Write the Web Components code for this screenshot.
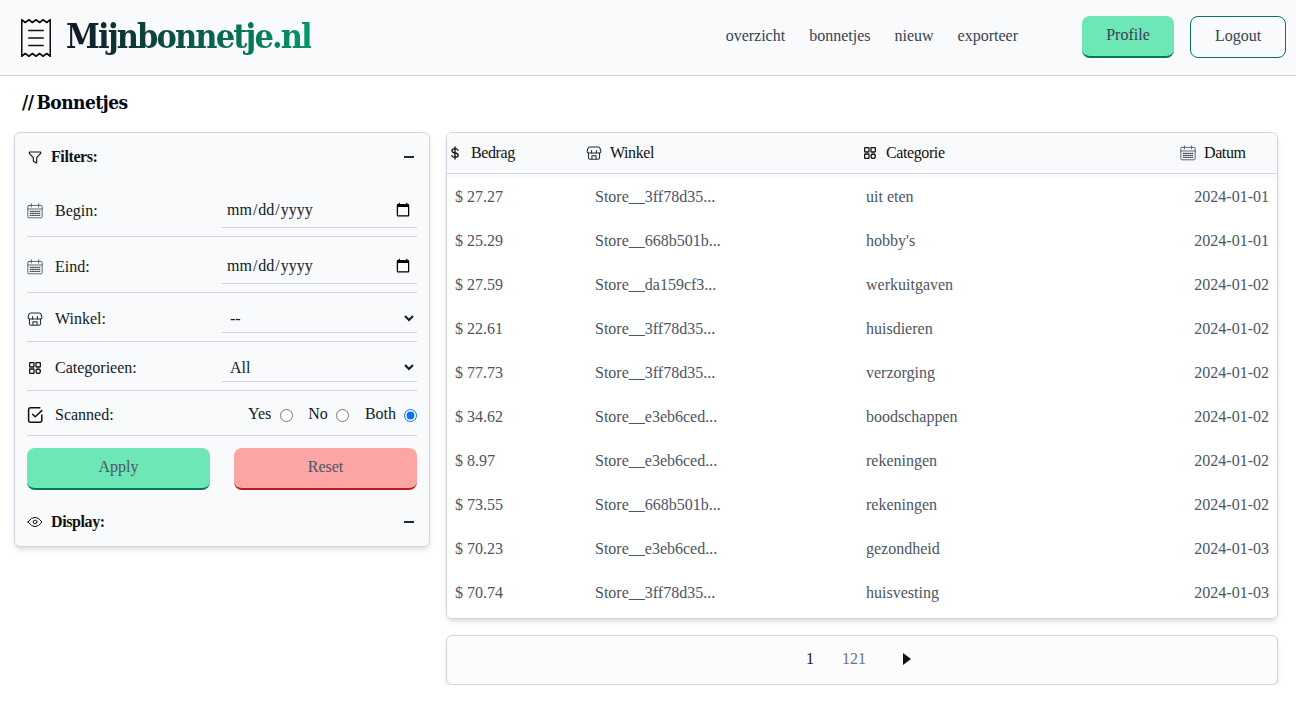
<!DOCTYPE html>
<html lang="nl">
<head>
<meta charset="utf-8">
<title>Mijnbonnetje.nl</title>
<style>
    html, body { margin: 0; padding: 0; background: #fff; }
    body { font-family: "Liberation Serif", serif; font-size: 16px; color: #111827; }
</style>
</head>
<body>
<app-shell>
    <app-header></app-header>
    <page-title>Bonnetjes</page-title>
    <main-area>
        <filter-panel></filter-panel>
        <receipt-list></receipt-list>
    </main-area>
</app-shell>

<script>
const ICONS = {
    receipt: '<path d="M2 2 L5.5 4.5 L9 2 L12.5 4.5 L16 2 L19.5 4.5 L23 2 L26.5 4.5 L30 2 V36 L26.5 33.5 L23 36 L19.5 33.5 L16 36 L12.5 33.5 L9 36 L5.5 33.5 L2 36 Z" /><path d="M9 12 H23 M9 19 H23 M9 26 H23" />',
    filter: '<path d="M3.5 4.5 H20.5 V6.5 L14.5 13 V21 L9.5 18.5 V13 L3.5 6.5 Z" />',
    calendar: '<rect x="3" y="5" width="18" height="15.5" rx="1.5" /><path d="M7.5 3 V7 M16.5 3 V7 M3 9.5 H21" /><path stroke-dasharray="1.4 1.4" stroke-width="1.4" d="M6 12.5 H18 M6 15 H18 M6 17.5 H18" />',
    store: '<path d="M6 3.5 H18 Q20 3.5 20.8 5.5 L22 10 Q22 12 19.8 12 H4.2 Q2 12 2 10 L3.2 5.5 Q4 3.5 6 3.5 Z" /><path d="M4 12 V18.5 Q4 21 6.5 21 H17.5 Q20 21 20 18.5 V12 M9 21 V16 H15 V21 M8.5 8.5 V12 M15.5 8.5 V12" />',
    category: '<rect x="4" y="4" width="6.5" height="6.5" rx="0.6" /><rect x="13.5" y="4" width="6.5" height="6.5" rx="0.6" /><rect x="4" y="13.5" width="6.5" height="6.5" rx="0.6" /><circle cx="16.75" cy="16.75" r="3.25" />',
    check: '<path d="M18 3 H6.5 Q4 3 4 5.5 V18.5 Q4 21 6.5 21 H18 Q20.5 21 20.5 18.5 V12" /><path d="M9 11 L12.2 14.2 L20.5 6.5" />',
    eye: '<circle cx="12" cy="12" r="2.8" /><path d="M1.5 12 Q6.5 5 12 5 Q17.5 5 22.5 12 Q17.5 19 12 19 Q6.5 19 1.5 12 Z" />',
    dollar: '<path d="M16.5 8 Q15.5 5.5 12 5.5 Q7.5 5.5 7.5 8.8 Q7.5 11.5 12 12 Q16.8 12.5 16.8 15.4 Q16.8 18.5 12 18.5 Q8.5 18.5 7.3 16 M12 3 V21" />'
};

class AppIcon extends HTMLElement {
    connectedCallback() {
        const size = this.getAttribute('size') || 16;
        const height = this.getAttribute('height') || size;
        const view = this.getAttribute('view') || '0 0 24 24';
        const width = this.getAttribute('stroke') || 2;
        const root = this.attachShadow({ mode: 'open' });
        root.innerHTML = `
    <style>
        :host { display: inline-flex; flex: none; }
        svg { display: block; fill: none; stroke: currentColor; stroke-linecap: round; stroke-linejoin: round; }
    </style>
    <svg width="${size}" height="${height}" viewBox="${view}" preserveAspectRatio="none" stroke-width="${width}">${ICONS[this.getAttribute('name')]}</svg>`;
    }
}
customElements.define('app-icon', AppIcon);

class AppShell extends HTMLElement {
    constructor() {
        super();
        this.attachShadow({ mode: 'open' }).innerHTML = `
    <style>
        :host { display: block; }
    </style>
    <slot></slot>`;
    }
}
customElements.define('app-shell', AppShell);

class AppHeader extends HTMLElement {
    constructor() {
        super();
        this.attachShadow({ mode: 'open' }).innerHTML = `
    <style>
        :host {
            display: flex;
            align-items: center;
            height: 75px;
            box-sizing: content-box;
            border-bottom: 1px solid #d1d5db;
            background: #f9fafb;
            padding: 0 10px 0 21px;
        }
        .logo { display: flex; align-items: center; gap: 15px; color: #111; }
        .logo__text {
            font-family: "DejaVu Serif Condensed", "DejaVu Serif", serif;
            font-stretch: condensed;
            font-weight: 700;
            font-size: 34px;
            letter-spacing: -1.93px;
            line-height: 40px;
            margin-bottom: 4px;
            background: linear-gradient(90deg, #111827, #059669);
            -webkit-background-clip: text;
            background-clip: text;
            color: transparent;
        }
        nav { margin-left: auto; display: flex; gap: 24px; color: #374151; margin-right: 64px; margin-bottom: 4px; }
        .btn {
            box-sizing: border-box;
            width: 96px;
            height: 42px;
            margin-bottom: 2px;
            border-radius: 8px;
            display: flex;
            align-items: center;
            justify-content: center;
            color: #374151;
        }
        .btn--profile {
            width: 92px;
            background: #6ee7b7;
            border-bottom: 2px solid #047857;
            padding-bottom: 2px;
            margin-right: 16px;
        }
        .btn--logout { border: 1px solid #047857; padding-bottom: 2px; }
    </style>
    <div class="logo">
        <app-icon name="receipt" size="30" height="38" view="1.3 1.3 29.4 35.4" stroke="1.6"></app-icon>
        <span class="logo__text">Mijnbonnetje.nl</span>
    </div>
    <nav>
        <span>overzicht</span><span>bonnetjes</span><span>nieuw</span><span>exporteer</span>
    </nav>
    <div class="btn btn--profile">Profile</div>
    <div class="btn btn--logout">Logout</div>`;
    }
}
customElements.define('app-header', AppHeader);

class PageTitle extends HTMLElement {
    constructor() {
        super();
        this.attachShadow({ mode: 'open' }).innerHTML = `
    <style>
        :host {
            display: flex;
            gap: 3px;
            height: 56px;
            padding: 14px 0 0 22px;
            box-sizing: border-box;
            font-family: "DejaVu Serif Condensed", "DejaVu Serif", serif;
            font-stretch: condensed;
            font-weight: 700;
            font-size: 19px;
            letter-spacing: -0.55px;
            line-height: 24px;
            color: #030712;
        }
    </style>
    <span>//</span><slot></slot>`;
    }
}
customElements.define('page-title', PageTitle);

class MainArea extends HTMLElement {
    constructor() {
        super();
        this.attachShadow({ mode: 'open' }).innerHTML = `
    <style>
        :host {
            display: grid;
            grid-template-columns: 416px 832px;
            gap: 16px;
            padding: 0 18px 0 14px;
            align-items: start;
        }
    </style>
    <slot></slot>`;
    }
}
customElements.define('main-area', MainArea);

class FilterRow extends HTMLElement {
    constructor() {
        super();
        this.attachShadow({ mode: 'open' }).innerHTML = `
    <style>
        :host {
            display: flex;
            align-items: flex-start;
            box-sizing: border-box;
            border-bottom: 1px solid #d1d5db;
            height: var(--row-height, 56px);
            padding-top: var(--row-pad, 11px);
        }
        .label {
            display: flex;
            align-items: center;
            gap: 12px;
            box-sizing: border-box;
            height: var(--label-height, 36px);
            padding-top: 2px;
            color: #111827;
        }
        .icon { color: #111; display: flex; }
        .field { margin-left: auto; width: 195px; }
    </style>
    <div class="label"><span class="icon"><slot name="icon"></slot></span><slot name="label"></slot></div>
    <div class="field"><slot></slot></div>`;
    }
}
customElements.define('filter-row', FilterRow);

class DateField extends HTMLElement {
    constructor() {
        super();
        this.attachShadow({ mode: 'open' }).innerHTML = `
    <style>
        :host { display: block; }
        input {
            box-sizing: border-box;
            display: block;
            width: 100%;
            height: 36px;
            border: 0;
            border-bottom: 1px solid #d1d5db;
            background: transparent;
            padding: 0 4px 0 4px;
            font: 16px "Liberation Serif", serif;
            color: #111827;
            outline: 0;
        }
    </style>
    <input type="date">`;
    }
}
customElements.define('date-field', DateField);

class SelectField extends HTMLElement {
    constructor() {
        super();
        this.attachShadow({ mode: 'open' }).innerHTML = `
    <style>
        :host { display: block; }
        select {
            box-sizing: border-box;
            display: block;
            width: 100%;
            height: 29px;
            margin-top: 2px;
            border: 0;
            border-bottom: 1px solid #d1d5db;
            background: transparent;
            padding: 0 0 0 4px;
            font: 16px "Liberation Serif", serif;
            color: #111827;
            outline: 0;
        }
    </style>
    <select></select>`;
    }
    connectedCallback() {
        const option = document.createElement('option');
        option.textContent = this.getAttribute('value');
        this.shadowRoot.querySelector('select').appendChild(option);
    }
}
customElements.define('select-field', SelectField);

class RadioGroup extends HTMLElement {
    constructor() {
        super();
        this.attachShadow({ mode: 'open' }).innerHTML = `
    <style>
        :host {
            display: flex;
            justify-content: flex-end;
            align-items: center;
            gap: 16px;
            height: 46px;
            color: #111827;
        }
        label { display: flex; align-items: center; gap: 8px; }
        label:first-of-type { margin-right: -1px; gap: 9px; }
        input { margin: 2px 0 0; width: 13px; height: 13px; }
    </style>
    <label>Yes <input type="radio" name="scanned"></label>
    <label>No <input type="radio" name="scanned"></label>
    <label>Both <input type="radio" name="scanned" checked></label>`;
    }
}
customElements.define('radio-group', RadioGroup);

class PanelHeading extends HTMLElement {
    constructor() {
        super();
        this.attachShadow({ mode: 'open' }).innerHTML = `
    <style>
        :host {
            display: flex;
            align-items: center;
            gap: 8px;
            font-weight: 700;
            letter-spacing: -0.4px;
            color: #111;
            height: 24px;
        }
        .dash { margin-left: auto; margin-right: 3px; width: 10px; height: 2px; background: #1f2937; }
    </style>
    <slot name="icon"></slot><slot></slot><span class="dash"></span>`;
    }
}
customElements.define('panel-heading', PanelHeading);

class FilterPanel extends HTMLElement {
    constructor() {
        super();
        this.attachShadow({ mode: 'open' }).innerHTML = `
    <style>
        :host {
            display: block;
            box-sizing: border-box;
            height: 415px;
            padding: 12px 12px 0;
            background: #f9fafb;
            border: 1px solid #d1d5db;
            border-radius: 6px;
            box-shadow: 0 4px 6px -1px rgba(0,0,0,0.1), 0 2px 4px -2px rgba(0,0,0,0.1);
        }
        .rows { margin-top: 12px; }
        .actions { display: grid; grid-template-columns: 183px 183px; justify-content: space-between; margin-top: 12px; }
        .action {
            box-sizing: border-box;
            height: 42px;
            border-radius: 8px;
            display: flex;
            align-items: center;
            justify-content: center;
            padding-bottom: 2px;
            color: #4b5563;
        }
        .apply { background: #6ee7b7; border-bottom: 2px solid #047857; }
        .reset { background: #fca5a5; border-bottom: 2px solid #b91c1c; }
        .display { margin-top: 20px; }
    </style>
    <panel-heading><app-icon slot="icon" name="filter" size="16"  stroke="1.7"></app-icon>Filters:</panel-heading>
    <div class="rows">
        <filter-row>
            <app-icon slot="icon" name="calendar" size="16" view="2 2 20 20" stroke="1.1" style="color:#4b5563"></app-icon>
            <span slot="label">Begin:</span>
            <date-field></date-field>
        </filter-row>
        <filter-row>
            <app-icon slot="icon" name="calendar" size="16" view="2 2 20 20" stroke="1.1" style="color:#4b5563"></app-icon>
            <span slot="label">Eind:</span>
            <date-field></date-field>
        </filter-row>
        <filter-row style="--row-height:49px;--label-height:31px;--row-pad:9px">
            <app-icon slot="icon" name="store" size="16" view="0.5 0.5 23 23" stroke="1.5" style="color:#1f2937"></app-icon>
            <span slot="label">Winkel:</span>
            <select-field value="--"></select-field>
        </filter-row>
        <filter-row style="--row-height:49px;--label-height:31px;--row-pad:9px">
            <app-icon slot="icon" name="category" size="16" stroke="1.9"></app-icon>
            <span slot="label">Categorieen:</span>
            <select-field value="All"></select-field>
        </filter-row>
        <filter-row style="--row-height:45px;--label-height:46px;--row-pad:0">
            <app-icon slot="icon" name="check" size="16" view="2 2 20 20" stroke="1.9"></app-icon>
            <span slot="label">Scanned:</span>
            <radio-group></radio-group>
        </filter-row>
    </div>
    <div class="actions">
        <div class="action apply">Apply</div>
        <div class="action reset">Reset</div>
    </div>
    <panel-heading class="display"><app-icon slot="icon" name="eye" size="16" stroke="1.5"></app-icon>Display:</panel-heading>`;
    }
}
customElements.define('filter-panel', FilterPanel);

class ReceiptRow extends HTMLElement {
    constructor() {
        super();
        this.attachShadow({ mode: 'open' }).innerHTML = `
    <style>
        :host {
            display: grid;
            grid-template-columns: 140px 271px 1fr auto;
            align-items: center;
            height: 44px;
            color: #4b5563;
        }
        .amount, .store, .cat { padding-left: 8px; }
        .date { padding-right: 8px; }
    </style>
    <div class="amount"></div><div class="store"></div><div class="cat"></div><div class="date"></div>`;
    }
    connectedCallback() {
        this.shadowRoot.querySelector('.amount').textContent = this.getAttribute('amount');
        this.shadowRoot.querySelector('.store').textContent = this.getAttribute('store');
        this.shadowRoot.querySelector('.cat').textContent = this.getAttribute('cat');
        this.shadowRoot.querySelector('.date').textContent = this.getAttribute('date');
    }
}
customElements.define('receipt-row', ReceiptRow);

const RECEIPTS = [
    ['$ 27.27', 'Store__3ff78d35...', 'uit eten', '2024-01-01'],
    ['$ 25.29', 'Store__668b501b...', "hobby's", '2024-01-01'],
    ['$ 27.59', 'Store__da159cf3...', 'werkuitgaven', '2024-01-02'],
    ['$ 22.61', 'Store__3ff78d35...', 'huisdieren', '2024-01-02'],
    ['$ 77.73', 'Store__3ff78d35...', 'verzorging', '2024-01-02'],
    ['$ 34.62', 'Store__e3eb6ced...', 'boodschappen', '2024-01-02'],
    ['$ 8.97', 'Store__e3eb6ced...', 'rekeningen', '2024-01-02'],
    ['$ 73.55', 'Store__668b501b...', 'rekeningen', '2024-01-02'],
    ['$ 70.23', 'Store__e3eb6ced...', 'gezondheid', '2024-01-03'],
    ['$ 70.74', 'Store__3ff78d35...', 'huisvesting', '2024-01-03']
];

class ReceiptList extends HTMLElement {
    constructor() {
        super();
        this.attachShadow({ mode: 'open' }).innerHTML = `
    <style>
        :host { display: flex; flex-direction: column; gap: 16px; }
        .card {
            background: #fff;
            border: 1px solid #d1d5db;
            border-radius: 6px;
            box-shadow: 0 4px 6px -1px rgba(0,0,0,0.1), 0 2px 4px -2px rgba(0,0,0,0.1);
            overflow: hidden;
        }
        .head {
            display: grid;
            grid-template-columns: 140px 275px 318px 1fr;
            align-items: center;
            height: 41px;
            box-sizing: border-box;
            border-bottom: 1px solid #d1d5db;
            background: #f9fafb;
            color: #111;
            letter-spacing: -0.4px;
        }
        .head div { display: flex; align-items: center; gap: 8px; }
        .body {
            height: 444px;
            padding-top: 1px;
            box-sizing: border-box;
            background: linear-gradient(#f9fafb 4px, #fff 4px);
        }
        .pager {
            height: 50px;
            box-sizing: border-box;
            background: #fcfcfd;
            display: flex;
            align-items: center;
            justify-content: center;
            padding-bottom: 2px;
        }
        .pager span { color: #64748b; margin: 0 37px 0 28px; }
        .pager b { font-weight: 400; color: #111827; }
        .pager i {
            width: 0;
            height: 0;
            margin-right: 7px;
            border-left: 8px solid #111;
            border-top: 6.5px solid transparent;
            border-bottom: 6.5px solid transparent;
        }
    </style>
    <div class="card">
        <div class="head">
            <div><app-icon name="dollar" size="16" stroke="2"></app-icon>Bedrag</div>
            <div><app-icon name="store" size="16" view="0.5 0.5 23 23" stroke="1.5" style="color:#1f2937;margin-left:-1px"></app-icon>Winkel</div>
            <div><app-icon name="category" size="16" stroke="1.9"></app-icon>Categorie</div>
            <div><app-icon name="calendar" size="16" view="2 2 20 20" stroke="1.1" style="color:#4b5563"></app-icon>Datum</div>
        </div>
        <div class="body"></div>
    </div>
    <div class="card pager"><b>1</b><span>121</span><i></i></div>`;

        const body = this.shadowRoot.querySelector('.body');
        RECEIPTS.forEach(r => {
            const row = document.createElement('receipt-row');
            row.setAttribute('amount', r[0]);
            row.setAttribute('store', r[1]);
            row.setAttribute('cat', r[2]);
            row.setAttribute('date', r[3]);
            body.appendChild(row);
        });
    }
}
customElements.define('receipt-list', ReceiptList);
</script>
</body>
</html>
